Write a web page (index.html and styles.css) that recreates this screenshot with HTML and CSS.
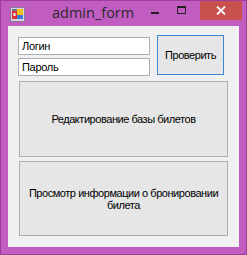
FILE: index.html
```html
<!DOCTYPE html>
<html>
<head>
<meta charset="utf-8">
<link rel="stylesheet" href="styles.css">
</head>
<body>
<div class="window">
  <div class="titlebar">
    <svg class="app-icon" width="15" height="15" viewBox="0 0 15 15">
      <rect x="0.5" y="0.5" width="14" height="14" fill="#d8d0e0" stroke="#8a7a96"/>
      <rect x="2" y="4" width="5" height="8" fill="#d83030"/>
      <rect x="3.5" y="6" width="2" height="3" fill="#ffffff"/>
      <rect x="7" y="2" width="6" height="6" fill="#f0c020"/>
      <rect x="7" y="8" width="6" height="4" fill="#3a78d8"/>
      <rect x="2" y="2" width="5" height="2" fill="#707890"/>
    </svg>
    <div class="title">admin_form</div>
    <div class="controls">
      <div class="ctl min"><span class="min-bar"></span></div>
      <div class="ctl max"><span class="max-box"></span></div>
      <div class="ctl close">
        <svg width="10" height="9" viewBox="0 0 10 9"><path d="M1 0.5 L9 8.5 M9 0.5 L1 8.5" stroke="#fff" stroke-width="1.8"/></svg>
      </div>
    </div>
  </div>
  <div class="client">
    <div class="top-row">
      <div class="fields">
        <div class="textbox">Логин</div>
        <div class="textbox">Пароль</div>
      </div>
      <div class="btn btn-check">Проверить</div>
    </div>
    <div class="btn btn-big">Редактирование базы билетов</div>
    <div class="btn btn-big btn-big2">Просмотр информации о бронировании билета</div>
  </div>
</div>
</body>
</html>
```
FILE: styles.css
```css
html, body {
  margin: 0;
  padding: 0;
  background: #ffffff;
}
.window {
  width: 247px;
  height: 255px;
  box-sizing: border-box;
  background: #c15cc1;
  border: 1px solid #9c3f9c;
  display: flex;
  flex-direction: column;
  font-family: "Liberation Sans", Arial, sans-serif;
}
.titlebar {
  height: 25px;
  display: flex;
  align-items: flex-start;
  position: relative;
}
.app-icon {
  margin: 6px 0 0 9px;
}
.title {
  font-family: "Open Sans", "Noto Sans", sans-serif;
  font-size: 14.5px;
  color: #2a2a2a;
  margin: 2px 0 0 27px;
  line-height: 20px;
}
.controls {
  margin-left: auto;
  display: flex;
  align-items: flex-start;
  margin-right: 4px;
}
.ctl {
  height: 19px;
  display: flex;
  align-items: center;
  justify-content: center;
}
.min {
  width: 26px;
}
.min-bar {
  width: 8px;
  height: 2px;
  background: #222;
  margin-top: 4px;
}
.max {
  width: 26px;
  margin-right: 6px;
}
.max-box {
  width: 7px;
  height: 5px;
  border: 1px solid #222;
  border-top-width: 2px;
  margin-top: -2px;
}
.close {
  width: 42px;
  background: #c9504c;
}
.client {
  flex: 1;
  margin: 0 7px 7px 7px;
  background: #f0f0f0;
  display: flex;
  flex-direction: column;
  padding: 9px 0 0 10px;
}
.top-row {
  display: flex;
  align-items: flex-start;
}
.fields {
  display: flex;
  flex-direction: column;
  gap: 3px;
  padding-top: 2px;
}
.textbox {
  width: 132px;
  height: 18px;
  box-sizing: border-box;
  background: #ffffff;
  border: 1px solid #abadb3;
  font-size: 11px;
  letter-spacing: -0.3px;
  color: #000;
  padding: 2px 0 0 3px;
  line-height: 13px;
}
.btn {
  box-sizing: border-box;
  background: #e6e6e6;
  border: 1px solid #adadad;
  font-size: 11px;
  letter-spacing: -0.45px;
  color: #000;
  display: flex;
  align-items: center;
  justify-content: center;
  text-align: center;
  line-height: 12px;
}
.btn-check {
  width: 67px;
  height: 40px;
  margin-left: 7px;
  border-color: #3c8ad3;
}
.btn-big {
  width: 209px;
  height: 76px;
  margin: 5px 0 0 1px;
}
.btn-big2 {
  height: 75px;
  margin-top: 4px;
  padding: 0 3px;
}
```
